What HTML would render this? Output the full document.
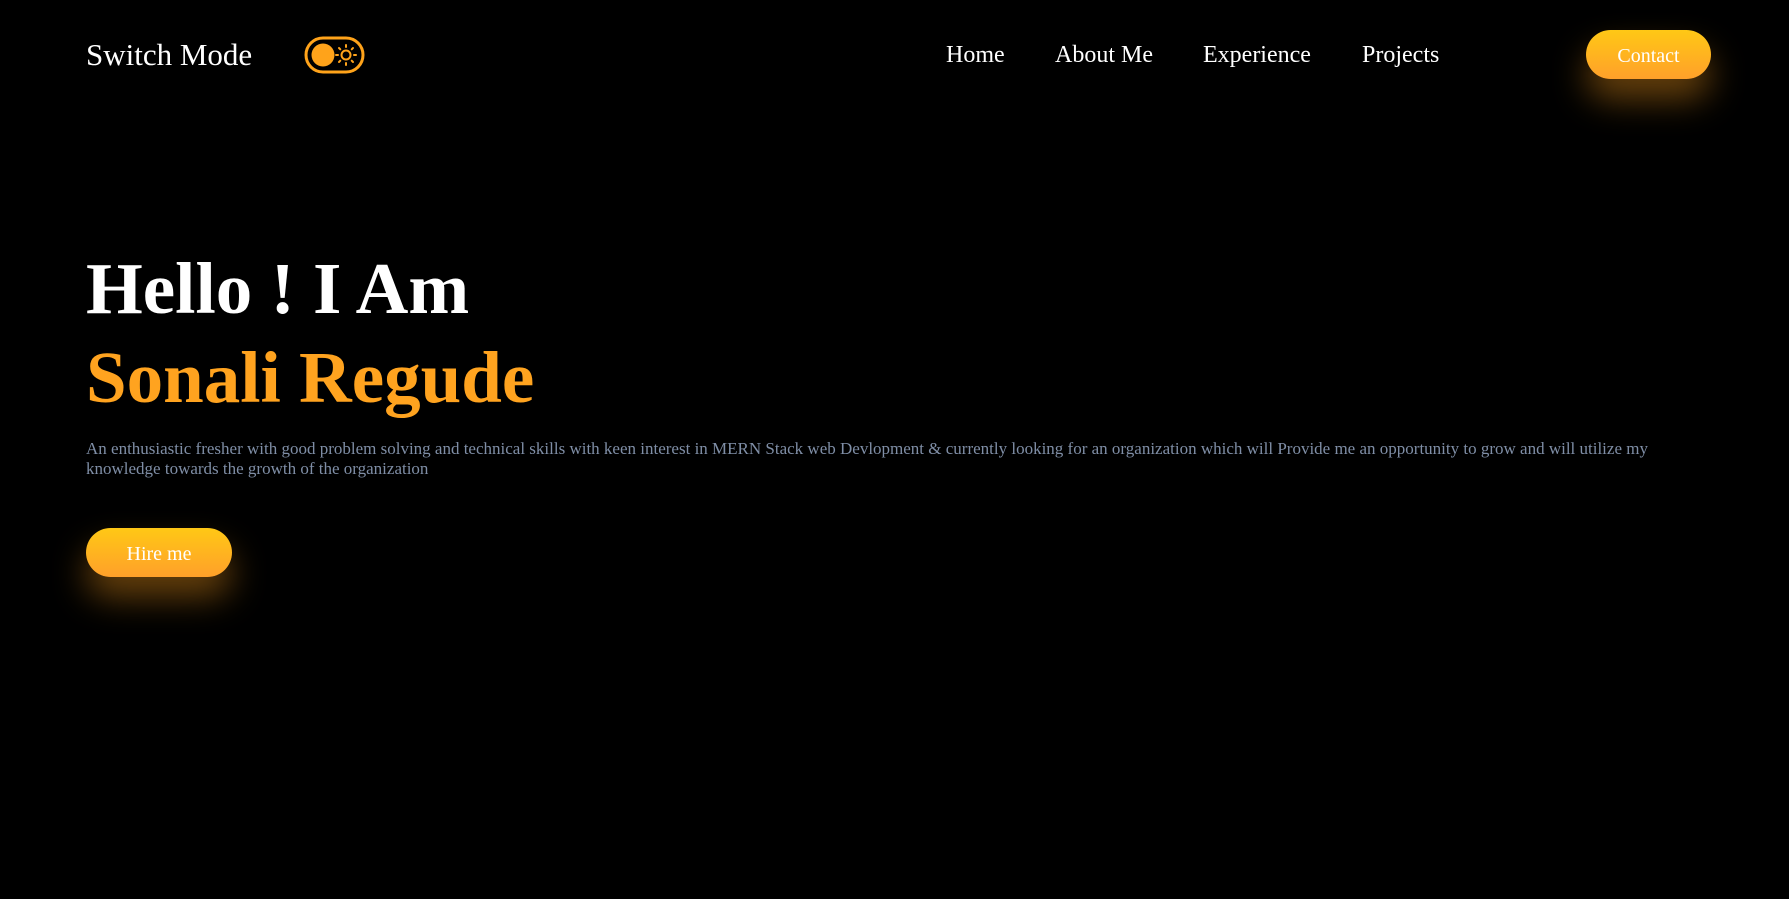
<!DOCTYPE html>
<html><head><meta charset="utf-8"><style>
*{margin:0;padding:0;box-sizing:border-box}
body{width:1789px;height:899px;background:#000;font-family:"Liberation Serif",serif;color:#fff;position:relative;overflow:hidden}
.abs{position:absolute;white-space:nowrap}
.logo{left:86px;top:35px;font-size:31px;line-height:40px}
.nav{top:40px;font-size:24px;line-height:30px}
.btn{position:absolute;border-radius:25px;background:linear-gradient(#ffc815,#ffa02a);color:#fff;font-size:20px;text-align:center;line-height:52px;height:49px;box-shadow:0 20px 34px rgba(255,160,30,0.4)}
h1{position:absolute;left:86px;font-weight:bold;font-size:73px;line-height:80px;white-space:nowrap}
p{position:absolute;left:86px;top:439px;width:1640px;font-size:17px;line-height:20px;color:#7f8ea6}
</style></head><body>
<div class="abs logo">Switch Mode</div>
<svg class="abs" style="left:304px;top:36px" width="61" height="38" viewBox="0 0 61 38">
<rect x="2" y="2" width="57" height="34" rx="17" fill="none" stroke="#ffa31a" stroke-width="3"/>
<circle cx="19" cy="19" r="11.5" fill="#ffa31a"/>
<circle cx="42" cy="19" r="4.5" fill="none" stroke="#ffa31a" stroke-width="2"/>
<g stroke="#ffa31a" stroke-width="2" stroke-linecap="round">
<line x1="42" y1="9" x2="42" y2="11"/><line x1="42" y1="27" x2="42" y2="29"/>
<line x1="32" y1="19" x2="34" y2="19"/><line x1="50" y1="19" x2="52" y2="19"/>
<line x1="35" y1="12" x2="36.3" y2="13.3"/><line x1="47.7" y1="24.7" x2="49" y2="26"/>
<line x1="35" y1="26" x2="36.3" y2="24.7"/><line x1="47.7" y1="13.3" x2="49" y2="12"/>
</g></svg>
<div class="abs nav" style="left:946px">Home</div>
<div class="abs nav" style="left:1055px">About Me</div>
<div class="abs nav" style="left:1203px">Experience</div>
<div class="abs nav" style="left:1362px">Projects</div>
<div class="btn" style="left:1586px;top:30px;width:125px">Contact</div>
<h1 style="top:249px">Hello ! I Am</h1>
<h1 style="top:338px;color:#ffa31f">Sonali Regude</h1>
<p>An enthusiastic fresher with good problem solving and technical skills with keen interest in MERN Stack web Devlopment &amp; currently looking for an organization which will Provide me an opportunity to grow and will utilize my knowledge towards the growth of the organization</p>
<div class="btn" style="left:86px;top:528px;width:146px">Hire me</div>
</body></html>
